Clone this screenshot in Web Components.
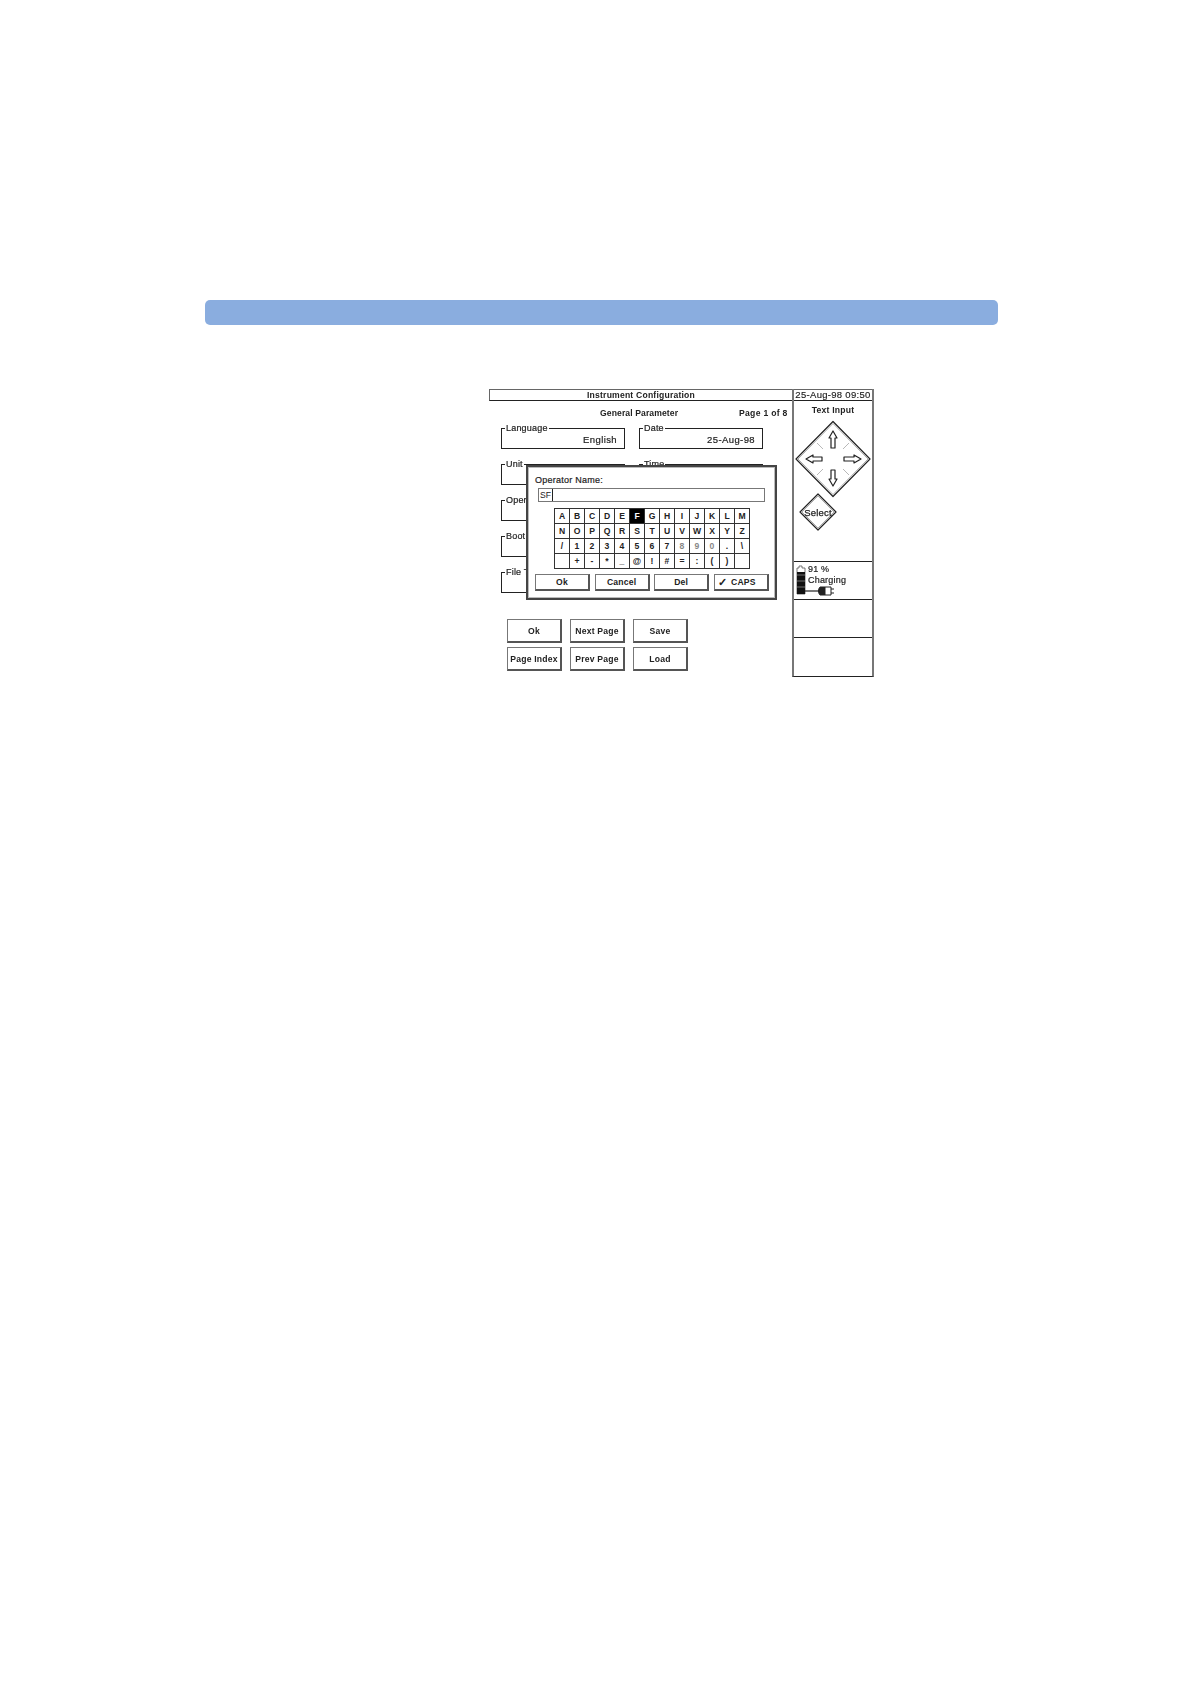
<!DOCTYPE html>
<html>
<head>
<meta charset="utf-8">
<title>Instrument Configuration</title>
<style>
    html, body { margin: 0; background: #fff; }
    body { font-family: "Liberation Sans", Arial, sans-serif; font-size: 9px; color: #222; }
</style>
</head>
<body>
<manual-page>
    <instrument-screen>
        <group-box slot="fields" label="Language" value="English"></group-box>
        <group-box slot="fields" label="Date" value="25-Aug-98"></group-box>
        <group-box slot="fields" label="Unit"></group-box>
        <group-box slot="fields" label="Time"></group-box>
        <group-box slot="fields" label="Oper"></group-box>
        <span slot="fields"></span>
        <group-box slot="fields" label="Boot"></group-box>
        <span slot="fields"></span>
        <group-box slot="fields" label="File T"></group-box>
    </instrument-screen>
</manual-page>

<script>
const pageTemplate = document.createElement('template');
pageTemplate.innerHTML = `
    <style>
        :host { display: block; width: 1190px; height: 1684px; padding: 300px 0 0 205px; box-sizing: border-box; }
        .bar { width: 793px; height: 25px; background: #8aaddf; border-radius: 5px; }
        .content { margin: 64px 0 0 284px; }
    </style>
    <div class="bar"></div>
    <div class="content"><slot></slot></div>
`;

class ManualPage extends HTMLElement {
    connectedCallback() {
        this.attachShadow({mode: 'open'}).appendChild(pageTemplate.content.cloneNode(true));
    }
}

const screenTemplate = document.createElement('template');
screenTemplate.innerHTML = `
    <style>
        :host { display: flex; position: relative; width: 384px; height: 288px; font-weight: 700; color: #222; filter: blur(.3px); }
        .main { width: 303px; flex: none; }
        .title { height: 12px; box-sizing: border-box; border: 1px solid #666; border-bottom-color: #222; border-right: 0; text-align: center; font-size: 8.6px; line-height: 11px; letter-spacing: .2px; }
        .sub { display: flex; height: 15px; padding-top: 6px; font-size: 8.6px; line-height: 12px; }
        .sub .middle { margin-left: 111px; width: 139px; letter-spacing: .1px; }
        .sub .pages { letter-spacing: .3px; }
        .fields { display: grid; grid-template-columns: 124px 124px; column-gap: 14px; grid-auto-rows: 26px; row-gap: 10px; margin: 1px 0 0 12px; }
        .keys { display: grid; grid-template-columns: repeat(3, 55px); grid-auto-rows: 24px; gap: 4px 8px; margin: 26px 0 0 18px; }
        dialog-box { position: absolute; left: 37px; top: 76px; }
    </style>
    <div class="main">
        <div class="title">Instrument Configuration</div>
        <div class="sub"><span class="middle">General Parameter</span><span class="pages">Page 1 of 8</span></div>
        <div class="fields"><slot name="fields"></slot></div>
        <div class="keys">
            <soft-key>Ok</soft-key><soft-key>Next Page</soft-key><soft-key>Save</soft-key>
            <soft-key>Page Index</soft-key><soft-key>Prev Page</soft-key><soft-key>Load</soft-key>
        </div>
    </div>
    <status-panel></status-panel>
    <dialog-box></dialog-box>
`;

class InstrumentScreen extends HTMLElement {
    connectedCallback() {
        this.attachShadow({mode: 'open'}).appendChild(screenTemplate.content.cloneNode(true));
    }
}

const boxTemplate = document.createElement('template');
boxTemplate.innerHTML = `
    <style>
        :host { display: block; height: 26px; font-weight: 400; -webkit-text-stroke: .2px #222; }
        fieldset { margin: 0; padding: 0 7px 0 0; height: 26px; box-sizing: border-box; border: 1px solid #222; min-width: 0; }
        legend { padding: 0 1px; margin-left: 3px; font-size: 9px; line-height: 10px; letter-spacing: .2px; }
        .value { text-align: right; font-size: 9.5px; line-height: 14px; letter-spacing: .4px; }
    </style>
    <fieldset><legend id="label"></legend><div class="value" id="value"></div></fieldset>
`;

class GroupBox extends HTMLElement {
    connectedCallback() {
        const root = this.attachShadow({mode: 'open'});
        root.appendChild(boxTemplate.content.cloneNode(true));
        root.getElementById('label').textContent = this.getAttribute('label');
        root.getElementById('value').textContent = this.getAttribute('value') || '';
    }
}

const keyTemplate = document.createElement('template');
keyTemplate.innerHTML = `
    <style>
        :host { display: flex; align-items: center; justify-content: center; box-sizing: border-box; border: 1px solid #777; border-right: 2px solid #555; border-bottom: 2px solid #555; font-size: 8.6px; font-weight: 700; letter-spacing: .2px; background: #fff; white-space: nowrap; }
    </style>
    <slot></slot>
`;

class SoftKey extends HTMLElement {
    connectedCallback() {
        this.attachShadow({mode: 'open'}).appendChild(keyTemplate.content.cloneNode(true));
    }
}

const dialogTemplate = document.createElement('template');
dialogTemplate.innerHTML = `
    <style>
        :host { display: block; width: 251px; height: 135px; box-sizing: border-box; background: #fff; border: 2px solid #444; }
        .inner { height: 100%; box-sizing: border-box; border: 1px solid #bbb; padding: 7px 0 0 6px; }
        .caption { font-size: 9px; line-height: 11px; font-weight: 400; letter-spacing: .25px; -webkit-text-stroke: .2px #222; }
        .input { display: flex; align-items: center; height: 14px; box-sizing: border-box; margin: 2px 0 6px 3px; width: 227px; border: 1px solid #777; padding-left: 1px; font-size: 8.6px; font-weight: 400; }
        .input i { display: block; width: 1px; height: 12px; background: #222; margin-left: 1px; }
        .keyboard { display: grid; grid-template-columns: repeat(13, 15px); grid-auto-rows: 15px; width: 196px; margin-left: 19px; border-top: 1px solid #333; border-left: 1px solid #333; box-sizing: border-box; }
        .keyboard span { display: flex; align-items: center; justify-content: center; box-sizing: border-box; border-right: 1px solid #333; border-bottom: 1px solid #333; font-size: 8.6px; }
        .keyboard .on { background: #000; color: #fff; }
        .keyboard .dim { color: #888; }
        .actions { display: grid; grid-template-columns: repeat(4, 55px); column-gap: 4.6px; grid-auto-rows: 17px; margin-top: 5px; }
        .tick { margin-right: 4px; font-size: 11px; line-height: 10px; font-weight: 700; }
        .caps { margin-right: 8px; }
    </style>
    <div class="inner">
        <div class="caption">Operator Name:</div>
        <div class="input">SF<i></i></div>
        <div class="keyboard" id="keyboard"></div>
        <div class="actions">
            <soft-key>Ok</soft-key><soft-key>Cancel</soft-key><soft-key>Del</soft-key>
            <soft-key><span class="tick">✓</span><span class="caps">CAPS</span></soft-key>
        </div>
    </div>
`;

const keyRows = 'ABCDEFGHIJKLM' + 'NOPQRSTUVWXYZ' + '/1234567890.\\' + ' +-*_@!#=:() ';

class DialogBox extends HTMLElement {
    connectedCallback() {
        const root = this.attachShadow({mode: 'open'});
        root.appendChild(dialogTemplate.content.cloneNode(true));
        const keyboard = root.getElementById('keyboard');
        for (const ch of keyRows) {
            const key = document.createElement('span');
            key.textContent = ch;
            if (ch === 'F') key.className = 'on';
            if ('890'.includes(ch)) key.className = 'dim';
            keyboard.appendChild(key);
        }
    }
}

const panelTemplate = document.createElement('template');
panelTemplate.innerHTML = `
    <style>
        :host { display: flex; flex-direction: column; width: 82px; height: 288px; box-sizing: border-box; border-left: 2px solid #777; border-right: 2px solid #777; border-bottom: 1px solid #222; flex: none; font-weight: 700; font-size: 8.6px; }
        .clock { height: 12px; box-sizing: border-box; border-top: 1px solid #666; border-bottom: 1px solid #222; font-weight: 400; font-size: 9.5px; line-height: 10px; text-align: center; white-space: nowrap; letter-spacing: .3px; -webkit-text-stroke: .15px #222; }
        .input { height: 162px; box-sizing: border-box; border-bottom: 1px solid #222; }
        .input h2 { margin: 0; padding-top: 3px; font-size: 8.6px; line-height: 12px; text-align: center; letter-spacing: .2px; }
        svg { display: block; }
        .nav { margin: 4px 0 0 0; }
        .select { position: relative; width: 40px; height: 40px; margin: -6px 0 0 4px; }
        .select span { position: absolute; inset: 0; display: flex; align-items: center; justify-content: center; font-size: 9.5px; font-weight: 400; letter-spacing: .2px; -webkit-text-stroke: .25px #222; }
        .battery { display: flex; height: 38px; box-sizing: border-box; border-bottom: 1px solid #222; font-weight: 400; font-size: 9px; line-height: 11px; position: relative; padding: 2px 0 0 14px; letter-spacing: .2px; -webkit-text-stroke: .2px #222; }
        .battery svg { position: absolute; left: 2px; top: 3px; }
        .slot { height: 38px; box-sizing: border-box; border-bottom: 1px solid #222; }
        .slot:last-child { border-bottom: 0; }
    </style>
    <div class="clock">25-Aug-98 09:50</div>
    <div class="input">
        <h2>Text Input</h2>
        <svg class="nav" width="78" height="78" viewBox="0 0 78 78" fill="none" stroke="#222" stroke-linejoin="round">
            <path d="M39 1.5 76 39 39 76.5 2 39Z" stroke-width="1.2"/>
            <path d="M39 3.5 74 39 39 74.5 4 39Z" stroke-width=".7" stroke="#888"/>
            <path d="M23 23 29 29M55 23 49 29M23 55 29 49M55 55 49 49" stroke="#999" stroke-width=".7"/>
            <path d="M39 11 43 18H41V28H37V18H35Z M39 66 43 59H41V50H37V59H35Z" stroke-width="1.2"/>
            <path d="M12 39 19 35V37H28V41H19V43Z M67 39 60 35V37H50V41H60V43Z" stroke-width="1.2"/>
        </svg>
        <div class="select">
            <svg width="40" height="40" viewBox="0 0 40 40" fill="none" stroke="#222" stroke-linejoin="round">
                <path d="M20 2 38 20 20 38 2 20Z" stroke-width="1.2"/>
                <path d="M20 4 36 20 20 36 4 20Z" stroke="#888" stroke-width=".7"/>
            </svg>
            <span>Select</span>
        </div>
    </div>
    <div class="battery">
        <svg width="10" height="32" viewBox="0 0 10 32">
            <path d="M3 1H6V3H9V29H1V3H3Z" fill="#fff" stroke="#555" stroke-width=".8"/>
            <path d="M1 7H9V29H1Z" fill="#111"/>
            <path d="M1 10H9M1 16H9M1 22H9" stroke="#999" stroke-width=".7"/>
        </svg>
        <svg style="left:11px;top:23px" width="34" height="12" viewBox="0 0 34 12" fill="none" stroke="#222">
            <path d="M0 6H15" stroke-width="1.2"/>
            <path d="M15 2H20V10H15C13 8 13 4 15 2Z" fill="#222"/>
            <path d="M20 2H26M20 10H26M26 2V10" stroke-width="1"/>
            <path d="M26 4H29M26 8H29" stroke-width="1"/>
        </svg>
        <div>91 %<br>Charging</div>
    </div>
    <div class="slot"></div>
    <div class="slot"></div>
`;

class StatusPanel extends HTMLElement {
    connectedCallback() {
        this.attachShadow({mode: 'open'}).appendChild(panelTemplate.content.cloneNode(true));
    }
}

customElements.define('manual-page', ManualPage);
customElements.define('soft-key', SoftKey);
customElements.define('group-box', GroupBox);
customElements.define('dialog-box', DialogBox);
customElements.define('status-panel', StatusPanel);
customElements.define('instrument-screen', InstrumentScreen);
</script>
</body>
</html>
